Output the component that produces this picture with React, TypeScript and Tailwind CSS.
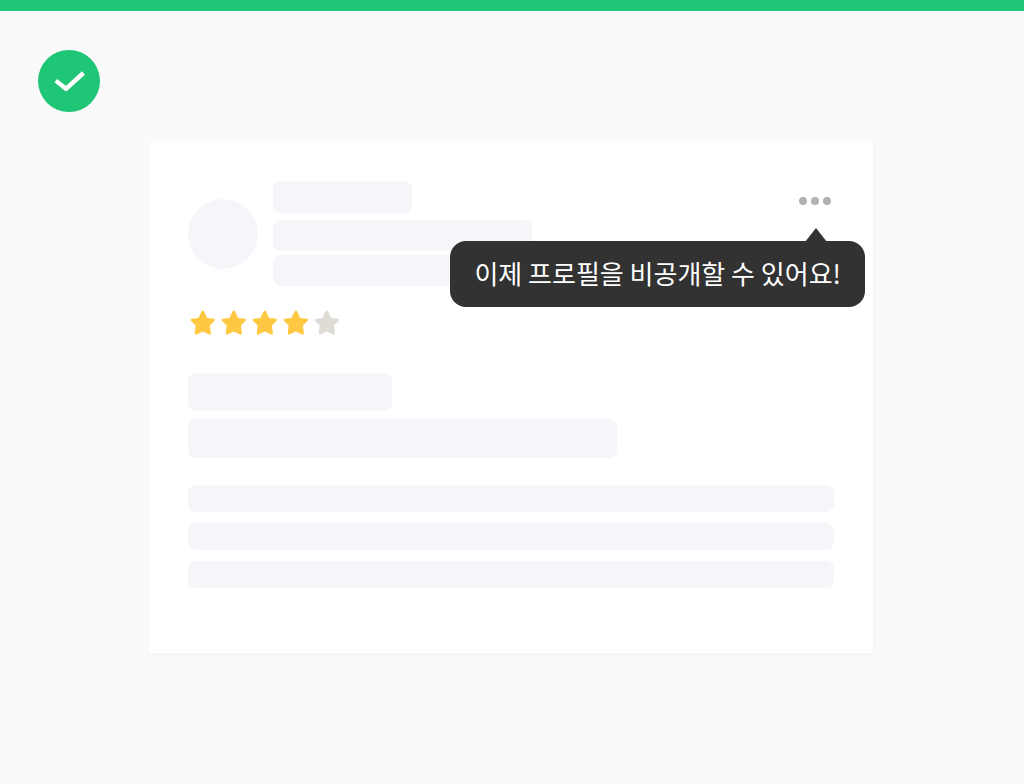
const STAR =
  "M12.8 0.6C13.4 0.6 13.8 1 14.1 1.6L17.2 7.9L23.8 8.8C25.1 9 25.4 10 24.5 10.9L19.9 15.4L20.9 23C21 24.3 20.2 24.9 19.1 24.4L12.8 21.6L6.5 24.4C5.4 24.9 4.6 24.3 4.7 23L5.7 15.4L1.1 10.9C0.2 10 0.5 9 1.8 8.8L8.4 7.9L11.5 1.6C11.8 1 12.2 0.6 12.8 0.6Z";

function Bar({ className }: { className: string }) {
  return <div className={`max-w-full rounded-lg bg-[#f5f6fa] ${className}`} />;
}

function Rating({ value }: { value: number }) {
  return (
    <div role="img" aria-label={`${value} / 5`} className="flex gap-1.5 pl-0.5">
      {[1, 2, 3, 4, 5].map((n) => (
        <svg
          key={n}
          viewBox="0 0 25 25"
          className={n <= value ? "size-[25px] fill-[#ffc842]" : "size-[25px] fill-[#dedcd5]"}
        >
          <path d={STAR} />
        </svg>
      ))}
    </div>
  );
}

function ProfileMenu() {
  return (
    <div className="relative pt-4">
      <button
        type="button"
        aria-label="더보기"
        aria-describedby="profile-tip"
        className="flex h-2 items-center gap-1 pr-[3px]"
      >
        <span className="size-2 rounded-full bg-[#b2b2b2]" />
        <span className="size-2 rounded-full bg-[#b2b2b2]" />
        <span className="size-2 rounded-full bg-[#b2b2b2]" />
      </button>
      <div
        id="profile-tip"
        role="tooltip"
        className="absolute top-[60px] -right-[31px] flex h-[66px] items-center rounded-2xl bg-[#323232] px-6 pb-0.5 text-[26px] leading-10 font-normal whitespace-nowrap text-white"
      >
        <svg viewBox="0 0 22 14" className="absolute -top-[13px] right-[38px] h-3.5 w-[22px] fill-[#323232]">
          <path d="M11 0L22 14H0Z" />
        </svg>
        이제 프로필을 비공개할 수 있어요!
      </div>
    </div>
  );
}

export default function App() {
  return (
    <div className="min-h-screen bg-[#fafafa] font-['Noto_Sans_CJK_KR',sans-serif]">
      <header className="h-3 border-b border-white bg-[#1ec675]" />
      <main className="pt-[38px] pr-10 pb-10 pl-[38px]">
        <svg viewBox="0 0 62 62" role="img" aria-label="완료" className="size-[62px]">
          <circle cx="31" cy="31" r="31" fill="#1ec675" />
          <path
            d="M17.8 30.6L28 38.8L45.4 23"
            fill="none"
            stroke="white"
            strokeWidth="4.4"
            strokeLinejoin="round"
          />
        </svg>
        <article className="mx-auto mt-[31px] max-w-[724px] bg-white px-[39px] pt-[38px] pb-[65px] shadow-[0_2px_2px_1px_#f6f6fa]">
          <div className="flex items-start">
            <div className="mt-[18px] size-[70px] shrink-0 rounded-full bg-[#f5f6fa]" />
            <div className="ml-[15px] min-w-0 flex-1">
              <Bar className="h-8 w-[139px]" />
              <Bar className="mt-[7px] h-[31px] w-[259px]" />
              <Bar className="mt-1 h-[31px] w-[220px]" />
            </div>
            <ProfileMenu />
          </div>
          <div className="mt-6">
            <Rating value={4} />
          </div>
          <Bar className="mt-[38px] h-[38px] w-[204px]" />
          <Bar className="mt-2 h-[39px] w-[429px]" />
          <div className="mt-[27px] grid gap-[11px]">
            <Bar className="h-[27px] w-full" />
            <Bar className="h-[27px] w-full" />
            <Bar className="h-[27px] w-full" />
          </div>
        </article>
      </main>
    </div>
  );
}
